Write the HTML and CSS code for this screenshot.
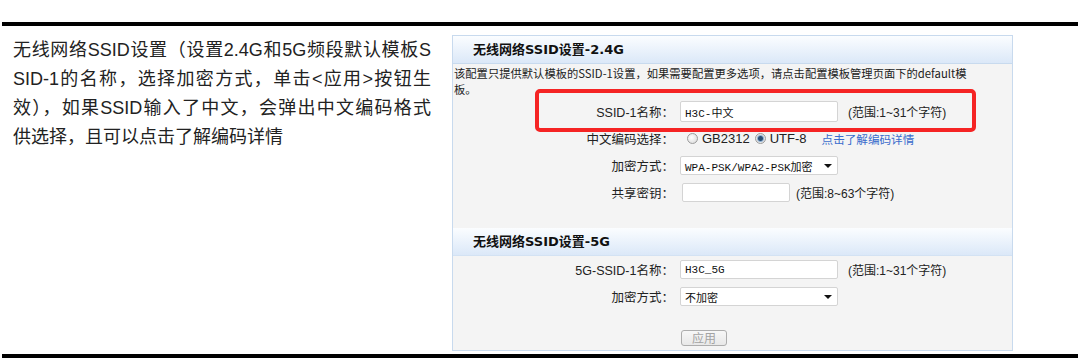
FILE: index.html
```html
<!DOCTYPE html>
<html lang="zh-CN">
<head>
    <meta charset="UTF-8">
    <meta name="viewport" content="width=device-width, initial-scale=1.0">
    <title>无线网络SSID设置</title>
    <link rel="stylesheet" href="styles.css">
</head>
<body>

<div class="doc">
    <div class="doc-row">
        <div class="doc-text">
            <p class="desc">
                <span>无线网络SSID设置（设置2.4G和5G频段默认模板S</span>
                <span>SID-1的名称，选择加密方式，单击&lt;应用&gt;按钮生</span>
                <span>效），如果SSID输入了中文，会弹出中文编码格式</span>
                <span>供选择，且可以点击了解编码详情</span>
            </p>
        </div>

        <div class="doc-shot">
            <div class="panel">
                <div class="panel-head">无线网络SSID设置-2.4G</div>
                <div class="panel-note">该配置只提供默认模板的SSID-1设置，如果需要配置更多选项，请点击配置模板管理页面下的default模<br>板。</div>

                <div class="form-row">
                    <label>SSID-1名称：</label>
                    <span class="field field-wide field-tall">H3C-中文</span>
                    <span class="hint">(范围:1~31个字符)</span>
                </div>
                <div class="form-row">
                    <label>中文编码选择：</label>
                    <span class="radio"></span><span class="radio-text">GB2312</span>
                    <span class="radio checked"></span><span class="radio-text">UTF-8</span>
                    <a class="link" href="#">点击了解编码详情</a>
                </div>
                <div class="form-row">
                    <label>加密方式：</label>
                    <span class="field field-wide select">WPA-PSK/WPA2-PSK加密</span>
                </div>
                <div class="form-row">
                    <label>共享密钥：</label>
                    <span class="field field-short"></span>
                    <span class="hint hint-near">(范围:8~63个字符)</span>
                </div>

                <div class="panel-head panel-head-second">无线网络SSID设置-5G</div>

                <div class="form-row">
                    <label>5G-SSID-1名称：</label>
                    <span class="field field-wide">H3C_5G</span>
                    <span class="hint">(范围:1~31个字符)</span>
                </div>
                <div class="form-row">
                    <label>加密方式：</label>
                    <span class="field field-wide select">不加密</span>
                </div>

                <div class="form-actions">
                    <button class="btn" disabled>应用</button>
                </div>

                <!-- red annotation around the SSID row -->
                <div class="mark"></div>
            </div>
        </div>
    </div>
</div>

</body>
</html>
```

FILE: styles.css
```css
body {
    margin: 0;
    padding: 0;
    background-color: #fff;
    font-family: "Liberation Sans", "Noto Sans CJK SC", sans-serif;
}

.doc {
    margin: 22px 3px 0 2px;
    border-top: 4px solid #000;
    border-bottom: 4px solid #000;
}

.doc-row {
    display: flex;
}

.doc-text {
    width: 450px;
    padding: 10px 0 0 11px;
    box-sizing: border-box;
}

.desc {
    margin: 0;
    width: 418px;
    font-size: 18px;
    line-height: 29px;
    color: #222;
}

.desc span {
    display: block;
    text-align: justify;
    text-align-last: justify;
    white-space: nowrap;
}

.desc span:last-child {
    text-align-last: auto;
}

.doc-shot {
    padding: 9px 0 3px 0;
}

/* router page screenshot */
.panel {
    position: relative;
    width: 561px;
    box-sizing: border-box;
    border: 1px solid #c8daee;
    background-color: #f4f4f4;
    padding-bottom: 4px;
    font-size: 12px;
    color: #222;
}

.panel-head {
    height: 27px;
    line-height: 28px;
    padding-left: 20px;
    border-bottom: 1px solid #c8daee;
    background: linear-gradient(#fbfdff, #dbe8f8);
    font-family: "DejaVu Sans", "Noto Sans CJK SC", sans-serif;
    font-weight: bold;
    font-size: 13px;
    color: #111;
}

.panel-head-second {
    margin-top: 22px;
    border-bottom-color: #d3e2f3;
}

.panel-note {
    padding: 1px 0 1px 1px;
    line-height: 16px;
    font-family: "Noto Sans CJK SC", sans-serif;
    font-size: 11.3px;
    color: #222;
}

.form-row {
    display: flex;
    align-items: center;
    height: 27px;
}

.form-row label {
    width: 221px;
    text-align: right;
    margin-right: 6px;
    font-size: 12.5px;
    color: #222;
}

.field {
    display: flex;
    align-items: center;
    height: 19px;
    box-sizing: border-box;
    padding-left: 4px;
    border: 1px solid #d4d4d4;
    border-radius: 2px;
    background-color: #fff;
    font-family: "Liberation Mono", "Noto Sans CJK SC", monospace;
    font-size: 11px;
    color: #111;
}

.field-wide {
    width: 158px;
}

.field-tall {
    height: 21px;
}

.field-short {
    width: 108px;
    margin-left: 2px;
}

.select {
    position: relative;
}

.select::after {
    content: "";
    position: absolute;
    right: 5px;
    top: 7px;
    border-left: 4px solid transparent;
    border-right: 4px solid transparent;
    border-top: 4px solid #111;
}

.hint {
    margin-left: 10px;
    font-size: 12px;
    color: #222;
}

.hint-near {
    margin-left: 6px;
}

.radio {
    width: 11px;
    height: 11px;
    box-sizing: border-box;
    margin-left: 7px;
    border: 1px solid #9b9b9b;
    border-radius: 50%;
    background: radial-gradient(circle at 40% 40%, #fff, #d6d6d6);
}

.radio.checked {
    margin-left: 5px;
    background: radial-gradient(circle, #2c4f74 0, #2c4f74 2px, #8fb1d3 3px, #e6e6e6 4px);
}

.radio-text {
    margin-left: 4px;
    font-size: 13px;
    color: #222;
}

.link {
    margin-left: 15px;
    font-size: 11.6px;
    color: #3a6ccc;
    text-decoration: none;
}

.form-actions {
    padding: 20px 0 0 228px;
}

.btn {
    display: block;
    width: 46px;
    height: 16px;
    padding: 0;
    border: 1px solid #adadad;
    border-radius: 3px;
    background: linear-gradient(#f7f7f7, #e8e8e8);
    font-family: "Noto Sans CJK SC", sans-serif;
    font-size: 12px;
    line-height: 14px;
    color: #a3a3a3;
}

.mark {
    position: absolute;
    left: 82px;
    top: 53px;
    width: 441px;
    height: 43px;
    box-sizing: border-box;
    border: 4px solid #f52424;
    border-radius: 5px;
}
```
